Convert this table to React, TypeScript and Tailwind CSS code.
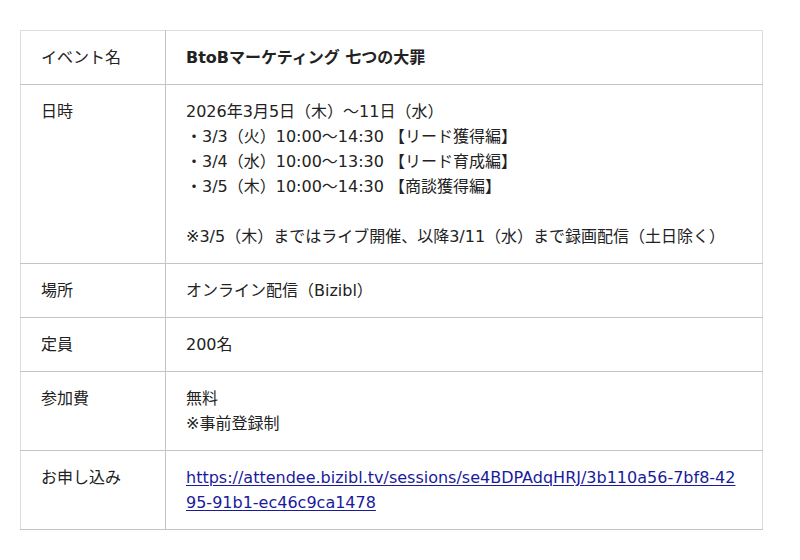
import React from "react";

const rows: { label: string; body: React.ReactNode }[] = [
  { label: "イベント名", body: <span className="font-bold">BtoBマーケティング 七つの大罪</span> },
  {
    label: "日時",
    body: (
      <>
        2026年3月5日（木）～11日（水）
        <br />・3/3（火）10:00～14:30 【リード獲得編】
        <br />・3/4（水）10:00～13:30 【リード育成編】
        <br />・3/5（木）10:00～14:30 【商談獲得編】
        <br />
        <br />※3/5（木）まではライブ開催、以降3/11（水）まで録画配信（土日除く）
      </>
    ),
  },
  { label: "場所", body: "オンライン配信（Bizibl）" },
  { label: "定員", body: "200名" },
  {
    label: "参加費",
    body: (
      <>
        無料
        <br />※事前登録制
      </>
    ),
  },
  {
    label: "お申し込み",
    body: (
      <a
        href="#"
        className="break-all text-[#1a1a9c] underline underline-offset-2"
      >
        https://attendee.bizibl.tv/sessions/se4BDPAdqHRJ/3b110a56-7bf8-4295-91b1-ec46c9ca1478
      </a>
    ),
  },
];

export default function App() {
  return (
    <div
      className="min-h-[560px] bg-white pt-[30px] pl-5 text-[#222]"
      style={{ fontFamily: '"DejaVu Sans", "Noto Sans CJK JP", sans-serif' }}
    >
      <table className="w-[743px] border-collapse border border-[#dcdcdc] text-[16px] leading-[25px]">
        <tbody>
          {rows.map((r) => (
            <tr key={r.label} className="border-b border-[#c4c4c4]">
              <td className="w-[145px] border-r border-[#c4c4c4] px-5 py-[14px] align-top">
                {r.label}
              </td>
              <td className="px-5 py-[14px] align-top">{r.body}</td>
            </tr>
          ))}
        </tbody>
      </table>
    </div>
  );
}
